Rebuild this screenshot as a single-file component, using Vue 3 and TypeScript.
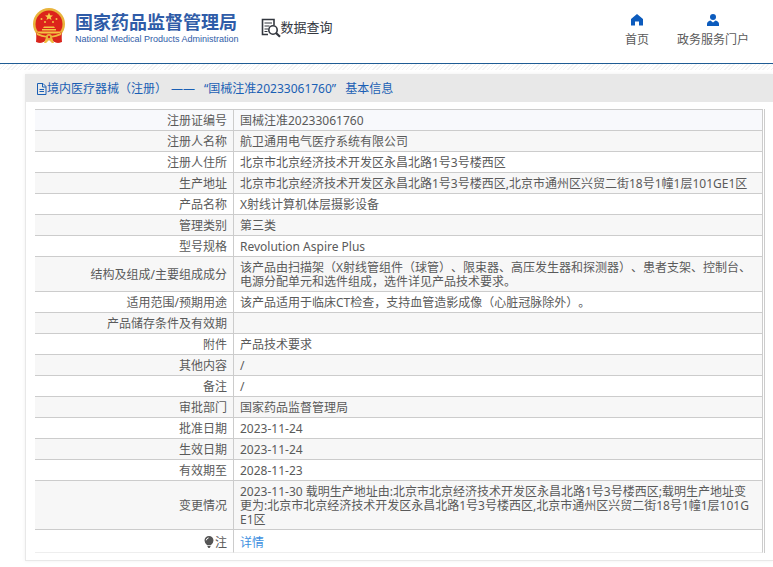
<script setup lang="ts">
interface Row {
  label: string
  value: string
  link?: boolean
}

const certNo = '国械注准20233061760'

const rows: Row[] = [
  { label: '注册证编号', value: certNo },
  { label: '注册人名称', value: '航卫通用电气医疗系统有限公司' },
  { label: '注册人住所', value: '北京市北京经济技术开发区永昌北路1号3号楼西区' },
  { label: '生产地址', value: '北京市北京经济技术开发区永昌北路1号3号楼西区,北京市通州区兴贸二街18号1幢1层101GE1区' },
  { label: '产品名称', value: 'X射线计算机体层摄影设备' },
  { label: '管理类别', value: '第三类' },
  { label: '型号规格', value: 'Revolution Aspire Plus' },
  { label: '结构及组成/主要组成成分', value: '该产品由扫描架（X射线管组件（球管）、限束器、高压发生器和探测器）、患者支架、控制台、电源分配单元和选件组成，选件详见产品技术要求。' },
  { label: '适用范围/预期用途', value: '该产品适用于临床CT检查，支持血管造影成像（心脏冠脉除外）。' },
  { label: '产品储存条件及有效期', value: '' },
  { label: '附件', value: '产品技术要求' },
  { label: '其他内容', value: '/' },
  { label: '备注', value: '/' },
  { label: '审批部门', value: '国家药品监督管理局' },
  { label: '批准日期', value: '2023-11-24' },
  { label: '生效日期', value: '2023-11-24' },
  { label: '有效期至', value: '2028-11-23' },
  { label: '变更情况', value: '2023-11-30 载明生产地址由:北京市北京经济技术开发区永昌北路1号3号楼西区;载明生产地址变更为:北京市北京经济技术开发区永昌北路1号3号楼西区,北京市通州区兴贸二街18号1幢1层101GE1区' },
  { label: '注', value: '详情', link: true },
]
</script>

<template>
  <div class="page" lang="zh-CN">
    <header class="top">
      <a class="brand" href="#">
        <svg class="emblem" viewBox="0 0 34 36" aria-hidden="true">
          <path d="M5 24L4 34Q9 36 13 33L17 31L21 33Q25 36 30 34L29 24Z" fill="#d9251c" />
          <circle cx="17" cy="16" r="16" fill="#e9b43c" />
          <circle cx="17" cy="16" r="13.500" fill="#dc241b" />
          <path d="M17 4.500l1.100 2.700 2.900.2-2.200 1.900.7 2.800-2.500-1.500-2.500 1.500.7-2.800L13 7.400l2.900-.2z" fill="#f6cf4a" />
          <g fill="#f3c544">
            <circle cx="9.500" cy="11" r="1" /><circle cx="13" cy="14" r="1" />
            <circle cx="21" cy="14" r="1" /><circle cx="24.500" cy="11" r="1" />
            <path d="M12 18.500h10l1 1.500H11zM10 21h14v1.500H10zM6 23.500h22v2H6z" />
          </g>
          <path d="M4 24Q17 31 30 24L29 34Q25 36 21 33L17 32L13 33Q9 36 5 34Z" fill="#d9251c" />
          <path d="M4 24Q10 28 17 28T30 24L29 27Q24 29 20 29.500L22 35H20L17 32L14 35H12L14 29.500Q10 29 5 27Z" fill="#f0bd40" />
          <circle cx="17" cy="29" r="3" fill="#e9b43c" />
          <circle cx="17" cy="29" r="1.200" fill="#dc241b" />
        </svg>
        <span class="brand-text">
          <span class="brand-cn">国家药品监督管理局</span>
          <span class="brand-en">National Medical Products Administration</span>
        </span>
      </a>
      <a class="query" href="#">
        <svg class="query-icon" viewBox="0 0 20 20" aria-hidden="true" fill="none" stroke="#33373f">
          <path d="M7 16.500H1.500V1.500H13V7" stroke-width="1.600" />
          <path d="M3.500 5h7.500M3.500 8h5M3.500 11h3.500M3.500 13.500h3" stroke-width="1.100" />
          <circle cx="12" cy="12" r="4.200" stroke-width="1.600" />
          <path d="M15 15l4 3.700" stroke-width="2.200" />
        </svg>
        <span>数据查询</span>
      </a>
      <nav class="nav">
        <a class="nav-item" href="#">
          <svg viewBox="0 0 12 12" aria-hidden="true"><path d="M6 0L12 5v6.500H8V7.500H4v4H0V5z" fill="#0c5bbd" /></svg>
          <span>首页</span>
        </a>
        <a class="nav-item" href="#">
          <svg viewBox="0 0 12 12" aria-hidden="true"><circle cx="6" cy="3" r="3" fill="#0c5bbd" /><path d="M0 12V10Q0 7.500 3.500 6.500L6 8.500 8.500 6.500Q12 7.500 12 10V12z" fill="#0c5bbd" /></svg>
          <span>政务服务门户</span>
        </a>
      </nav>
    </header>

    <main class="content">
      <section class="panel">
        <h1 class="panel-title">
          <svg class="doc-icon" viewBox="0 0 11 12" aria-hidden="true" fill="none" stroke="#1a5fb4"><path d="M1.500.5H7L10 3.500v8H1.500zM6.500.5V4H10M3.500 6.500h4.500M3.500 8.500h4.500" /></svg>
          <span>境内医疗器械（注册）</span>
          <span class="dash">——</span>
          <span class="cert">“{{ certNo }}”</span>
          <span>基本信息</span>
        </h1>
        <div class="table-wrap">
          <table class="info">
            <tbody>
              <tr v-for="row in rows" :key="row.label">
                <th scope="row">
                  <svg v-if="row.link" class="bulb" viewBox="0 0 10 12" aria-hidden="true"><path d="M5 0a4.500 4.500 0 0 1 4.500 4.500Q9.500 7 6.800 9.200H3.200Q.5 7 .5 4.500A4.500 4.500 0 0 1 5 0zM3.500 10h3v.8L5.500 12h-1l-1-1.200z" fill="#555" /><path d="M2.300 4.300Q2.500 2.200 4.600 1.900" fill="none" stroke="#fff" /></svg>{{ row.label }}
                </th>
                <td>
                  <a v-if="row.link" href="#">{{ row.value }}</a>
                  <template v-else>{{ row.value }}</template>
                </td>
              </tr>
            </tbody>
          </table>
        </div>
      </section>
    </main>
  </div>
</template>

<style>
body {
  margin: 0;
  background: #fff;
}
</style>

<style scoped>
.page {
  font: 12px/14px "Noto Sans", "Noto Sans CJK SC", sans-serif;
  color: #5a5a5a;
  text-spacing-trim: space-all;
}

.page a {
  text-decoration: none;
}

.top {
  display: flex;
  align-items: flex-start;
  box-sizing: border-box;
  height: 64px;
  padding: 0 24px 0 32px;
  border-bottom: 1px solid #1f5c94;
}

.brand {
  display: flex;
  gap: 9px;
  padding-top: 8px;
  color: #2f5ca8;
}

.emblem {
  width: 34px;
  height: 36px;
}

.brand-text {
  display: flex;
  flex-direction: column;
  padding-top: 4px;
  white-space: nowrap;
}

.brand-cn {
  font-size: 18px;
  line-height: 20px;
  font-weight: 700;
}

.brand-en {
  font: 9px/14px "Liberation Sans", Arial, sans-serif;
}

.query {
  display: flex;
  margin-left: 22px;
  padding-top: 18px;
  color: #33373f;
  font-size: 13px;
  line-height: 18px;
  white-space: nowrap;
}

.query-icon {
  width: 20px;
  height: 20px;
}

.nav {
  display: flex;
  gap: 28px;
  margin-left: auto;
  padding-top: 14px;
}

.nav-item {
  display: flex;
  flex-direction: column;
  align-items: center;
  gap: 7px;
  color: #5a5a5a;
  white-space: nowrap;
}

.nav-item svg {
  width: 12px;
  height: 12px;
}

.content {
  padding: 10px 0 6px 25px;
  background: repeating-linear-gradient(135deg, #f3f3f3 0 1px, #fff 1px 3px) 0 0 / 100% 6px no-repeat;
}

.panel {
  border: 1px solid #e8e8e8;
  border-top: 0;
  border-right: 0;
  background: #fff;
  box-shadow: 0 0 4px #f0f0f0;
}

.panel-title {
  display: flex;
  align-items: center;
  box-sizing: border-box;
  height: 28px;
  margin: 0;
  padding: 2px 0 0 10px;
  background: #e8e8e8;
  color: #1a5fb4;
  font-size: 12px;
  font-weight: 400;
  white-space: nowrap;
}

.doc-icon {
  width: 11px;
  height: 12px;
}

.dash {
  margin: 0 9px 0 4px;
}

.cert {
  margin-right: 9px;
}

.table-wrap {
  margin: 7px 8px 7px 9px;
  padding-right: 1px;
  border-right: 1px solid #ccc;
}

.info {
  width: 100%;
  border-collapse: separate;
  border-spacing: 0;
  border-top: 1px solid #ccc;
  table-layout: fixed;
}

.info th,
.info td {
  box-sizing: border-box;
  height: 21px;
  padding: 4px 8px 2px 6px;
  border-right: 1px solid #ccc;
  border-bottom: 1px solid #ccc;
  font-weight: 400;
  word-break: break-all;
  text-align: left;
}

.info th {
  width: 199px;
  padding-right: 6px;
  text-align: right;
}

.info tr:nth-child(even) {
  background: #f7f7f7;
}

.info tr:first-child {
  background: #f8f9fc;
}

.info tr:last-child > * {
  height: 23px;
  padding-top: 6px;
  border-bottom-color: #eee;
}

.info a {
  color: #3d8fe0;
}

.bulb {
  width: 10px;
  height: 12px;
  margin-right: 1px;
  vertical-align: -1px;
}
</style>
